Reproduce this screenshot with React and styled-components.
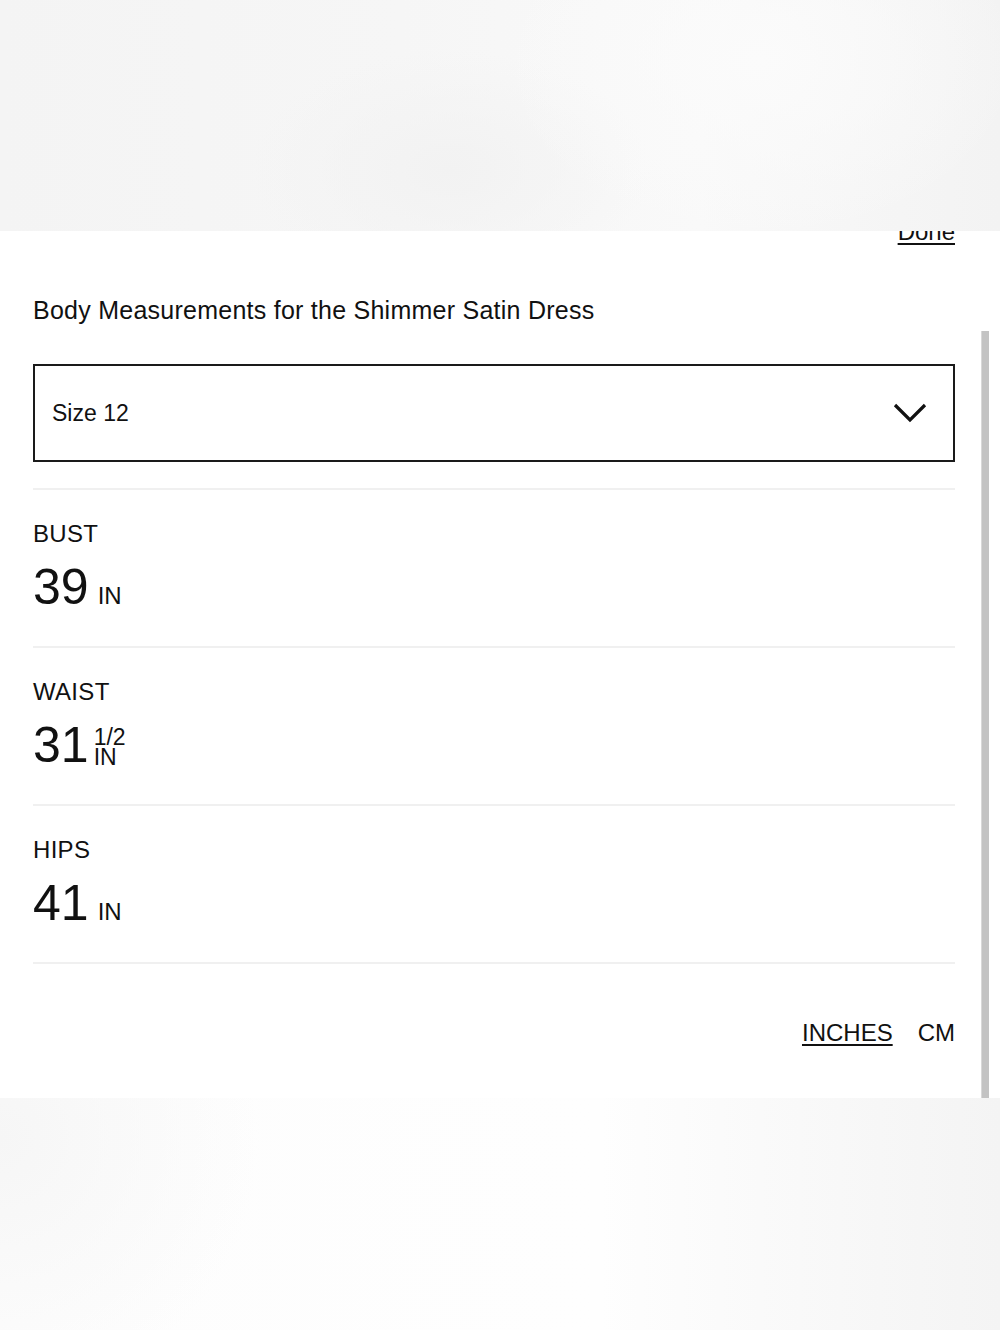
import React from "react";
import styled, { createGlobalStyle } from "styled-components";

const Global = createGlobalStyle`
  html, body { margin: 0; padding: 0; background: #fff; }
  body { font-family: "Liberation Sans", Arial, sans-serif; color: #111; }
  * { box-sizing: border-box; }
`;

const Page = styled.div`
  width: 1000px;
  height: 1330px;
  display: flex;
  flex-direction: column;
  overflow: hidden;
`;

const TopBand = styled.div`
  height: 231px;
  flex: none;
  background:
    radial-gradient(ellipse 260px 180px at 760px 60px, #fbfbfb 0%, rgba(251,251,251,0) 100%),
    radial-gradient(ellipse 200px 120px at 450px 170px, #f2f2f2 0%, rgba(242,242,242,0) 100%),
    linear-gradient(90deg, #f4f4f4 0%, #f6f6f6 40%, #f9f9f9 70%, #f3f3f3 100%);
  position: relative;
  z-index: 2;
`;

const BottomBand = styled.div`
  height: 232px;
  flex: none;
  background:
    radial-gradient(ellipse 260px 260px at 0px 40px, #f6f6f6 0%, rgba(246,246,246,0) 100%),
    linear-gradient(90deg, #fdfdfd 0%, #fefefe 60%, #f9f9f9 80%, #f4f4f4 100%);
`;

const Panel = styled.div`
  height: 867px;
  flex: none;
  background: #fff;
  position: relative;
  overflow: hidden;
  padding: 0 45px 0 33px;
  display: flex;
  flex-direction: column;
`;

const Scrollbar = styled.div`
  position: absolute;
  right: 11px;
  top: 100px;
  bottom: 0;
  width: 8px;
  background: #c3c3c3;
  border-left: 1px solid #d8d8d8;
`;

const DoneRow = styled.div`
  display: flex;
  justify-content: flex-end;
  margin-top: -11px;
`;

const TextLink = styled.a`
  font-size: 24px;
  line-height: 24px;
  color: #111;
  text-decoration: ${(p) => (p.$active ? "underline" : "none")};
  text-decoration-thickness: 2px;
  text-underline-offset: 3px;
  cursor: pointer;
`;

const Heading = styled.h2`
  margin: 51px 0 0;
  font-size: 25px;
  line-height: 30px;
  font-weight: 400;
  letter-spacing: 0.25px;
`;

const Select = styled.div`
  margin-top: 39px;
  height: 98px;
  border: 2px solid #1a1a1a;
  display: flex;
  align-items: center;
  justify-content: space-between;
  padding: 0 26px 0 17px;
  font-size: 23px;
`;

const List = styled.div`
  margin-top: 26px;
  display: flex;
  flex-direction: column;
`;

const Row = styled.div`
  height: 158px;
  border-top: 2px solid #f0f0f0;
  padding-top: 30px;
  display: flex;
  flex-direction: column;
  &:last-child {
    border-bottom: 2px solid #f0f0f0;
    height: 160px;
  }
`;

const Label = styled.div`
  font-size: 24px;
  line-height: 28px;
  letter-spacing: 0.3px;
`;

const Value = styled.div`
  margin-top: 11px;
  display: flex;
  align-items: baseline;
  gap: 9px;
  font-size: 50px;
  line-height: 56px;
`;

const Unit = styled.span`
  font-size: 24px;
`;

const Fraction = styled.span`
  display: inline-flex;
  flex-direction: column;
  font-size: 23px;
  line-height: 20px;
  align-self: flex-end;
  margin-bottom: 6px;
  margin-left: -4px;
`;

const Units = styled.div`
  margin-top: 57px;
  display: flex;
  justify-content: flex-end;
  gap: 25px;
`;

const Chevron = () => (
  <svg width="34" height="22" viewBox="0 0 34 22" fill="none">
    <path d="M2 3 L17 18 L32 3" stroke="#111" strokeWidth="3.2" />
  </svg>
);

const rows = [
  { label: "BUST", num: "39" },
  { label: "WAIST", num: "31", frac: "1/2" },
  { label: "HIPS", num: "41" },
];

export default function App() {
  return (
    <Page>
      <Global />
      <TopBand />
      <Panel>
        <Scrollbar />
        <DoneRow>
          <TextLink $active>Done</TextLink>
        </DoneRow>
        <Heading>Body Measurements for the Shimmer Satin Dress</Heading>
        <Select>
          <span>Size 12</span>
          <Chevron />
        </Select>
        <List>
          {rows.map((r) => (
            <Row key={r.label}>
              <Label>{r.label}</Label>
              <Value>
                <span>{r.num}</span>
                {r.frac ? (
                  <Fraction>
                    <span>{r.frac}</span>
                    <span>IN</span>
                  </Fraction>
                ) : (
                  <Unit>IN</Unit>
                )}
              </Value>
            </Row>
          ))}
        </List>
        <Units>
          <TextLink $active>INCHES</TextLink>
          <TextLink>CM</TextLink>
        </Units>
      </Panel>
      <BottomBand />
    </Page>
  );
}
